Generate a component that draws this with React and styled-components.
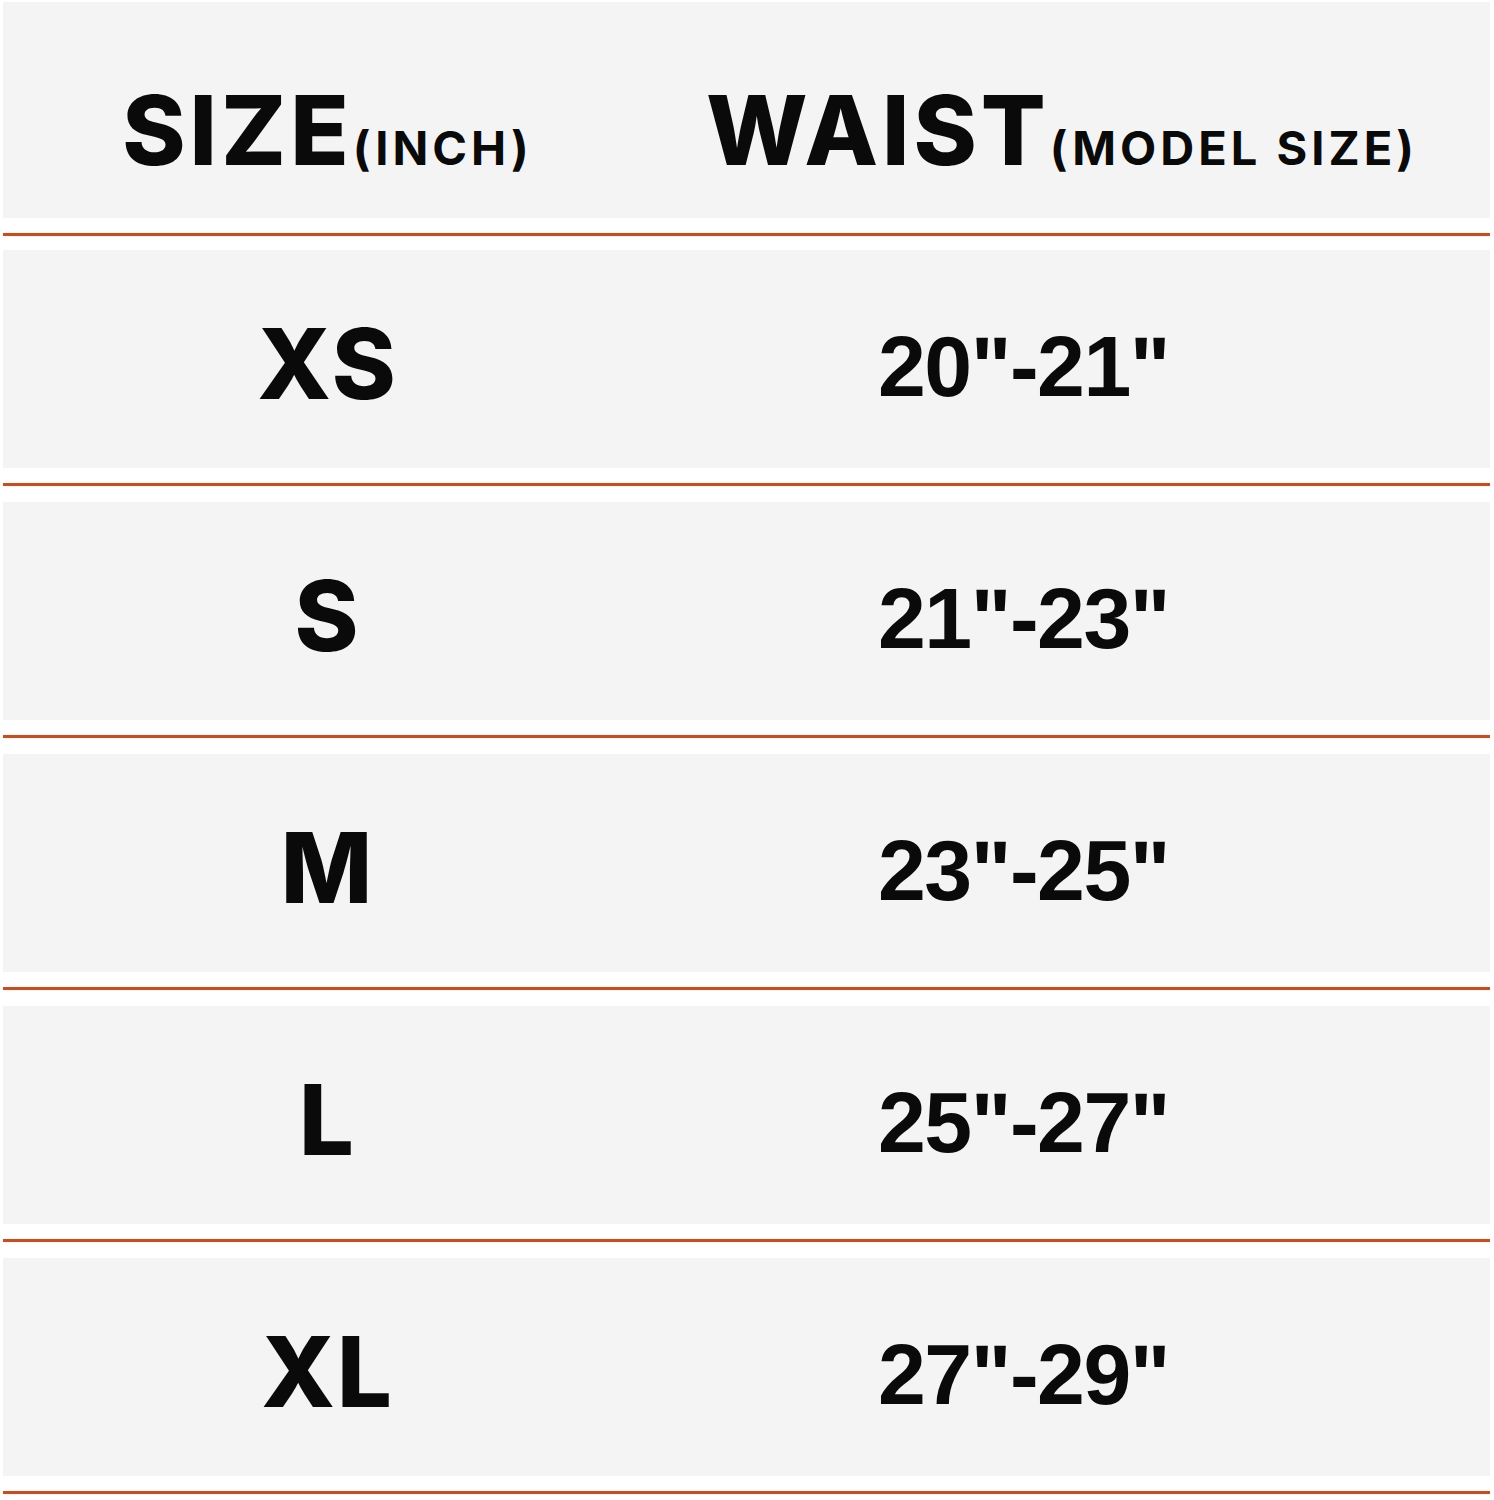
import styled, { createGlobalStyle } from "styled-components";

const GlobalStyle = createGlobalStyle`
  html, body {
    margin: 0;
    padding: 0;
    background: #ffffff;
  }
`;

const sizes = [
  { size: "XS", waist: "20\"-21\"" },
  { size: "S", waist: "21\"-23\"" },
  { size: "M", waist: "23\"-25\"" },
  { size: "L", waist: "25\"-27\"" },
  { size: "XL", waist: "27\"-29\"" },
];

const Chart = styled.div`
  width: 1494px;
  padding: 2px 4px 0 3px;
  box-sizing: border-box;
`;

const Band = styled.div`
  display: grid;
  grid-template-columns: 649px 1fr;
  align-items: center;
  height: ${({ header }) => (header ? "216px" : "218px")};
  background: #f4f4f4;
`;

const Divider = styled.div`
  height: 3px;
  margin: 15px 0 ${({ header }) => (header ? "14px" : "16px")};
  background: #b4552d;
  box-shadow: 0 0 2px rgba(236, 160, 100, 0.6);
`;

const HeadCell = styled.div`
  display: flex;
  align-items: baseline;
  justify-content: center;
  padding-top: 40px;
  padding-right: ${({ right }) => right || 0}px;
  font-family: Inter, "Open Sans", sans-serif;
  font-weight: 800;
  color: #0a0a0a;
`;

const Big = styled.span`
  font-size: 96px;
  letter-spacing: 4px;
  line-height: 1;
`;

const Small = styled.span`
  font-size: 47px;
  font-weight: 700;
  letter-spacing: 4px;
  margin-left: 0;
  line-height: 1;
`;

const SizeCell = styled.div`
  text-align: center;
  padding-top: 8px;
  font-family: Inter, "Open Sans", sans-serif;
  font-weight: 800;
  font-size: 97px;
  letter-spacing: 2px;
  color: #0a0a0a;
  line-height: 1;
`;

const WaistCell = styled.div`
  padding-left: 226px;
  padding-top: 14px;
  font-family: "Liberation Sans", Arial, sans-serif;
  font-weight: 700;
  font-size: 86px;
  letter-spacing: -1.5px;
  color: #0a0a0a;
  line-height: 1;
`;

export default function App() {
  return (
    <>
      <GlobalStyle />
      <Chart>
        <Band header>
          <HeadCell>
            <Big>SIZE</Big>
            <Small>(INCH)</Small>
          </HeadCell>
          <HeadCell right={18}>
            <Big>WAIST</Big>
            <Small>(MODEL SIZE)</Small>
          </HeadCell>
        </Band>
        <Divider header />
        {sizes.map((row) => (
          <div key={row.size}>
            <Band>
              <SizeCell>{row.size}</SizeCell>
              <WaistCell>{row.waist}</WaistCell>
            </Band>
            <Divider />
          </div>
        ))}
      </Chart>
    </>
  );
}
